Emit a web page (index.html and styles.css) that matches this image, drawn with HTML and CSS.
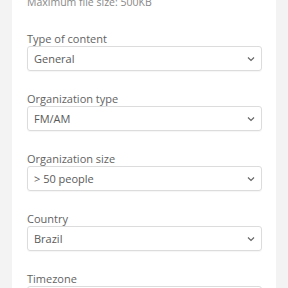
FILE: index.html
```html
<!DOCTYPE html>
<html>
<head>
    <meta charset="utf-8">
    <title>Settings</title>
    <link rel="stylesheet" href="styles.css">
</head>
<body>
    <div class="card">
        <p class="note">Maximum file size: 500KB</p>

        <div class="field">
            <label>Type of content</label>
            <div class="select"><span>General</span>
                <svg class="chev" width="8" height="6" viewBox="0 0 8 6"><path d="M1 1.5 L4 4.5 L7 1.5" fill="none" stroke="#666" stroke-width="1.2"/></svg>
            </div>
        </div>

        <div class="field">
            <label>Organization type</label>
            <div class="select"><span>FM/AM</span>
                <svg class="chev" width="8" height="6" viewBox="0 0 8 6"><path d="M1 1.5 L4 4.5 L7 1.5" fill="none" stroke="#666" stroke-width="1.2"/></svg>
            </div>
        </div>

        <div class="field">
            <label>Organization size</label>
            <div class="select"><span>&gt; 50 people</span>
                <svg class="chev" width="8" height="6" viewBox="0 0 8 6"><path d="M1 1.5 L4 4.5 L7 1.5" fill="none" stroke="#666" stroke-width="1.2"/></svg>
            </div>
        </div>

        <div class="field">
            <label>Country</label>
            <div class="select"><span>Brazil</span>
                <svg class="chev" width="8" height="6" viewBox="0 0 8 6"><path d="M1 1.5 L4 4.5 L7 1.5" fill="none" stroke="#666" stroke-width="1.2"/></svg>
            </div>
        </div>

        <div class="field">
            <label>Timezone</label>
            <div class="select"><span>America/Sao_Paulo</span>
                <svg class="chev" width="8" height="6" viewBox="0 0 8 6"><path d="M1 1.5 L4 4.5 L7 1.5" fill="none" stroke="#666" stroke-width="1.2"/></svg>
            </div>
        </div>
    </div>
</body>
</html>
```

FILE: styles.css
```css
body {
    margin: 0;
    background-color: #f3f3f3;
    font-family: "Open Sans", "Noto Sans", sans-serif;
    color: #555;
}

.card {
    margin: 0 12px;
    padding: 0 14px 40px 15px;
    background-color: #fff;
    height: 400px;
}

.note {
    margin: 0;
    margin-top: -5px;
    font-size: 10.5px;
    line-height: 14px;
    color: #888;
    padding-bottom: 23px;
}

.field {
    margin-bottom: 21px;
}

label {
    display: block;
    font-size: 11px;
    line-height: 14px;
    color: #636363;
}

.select {
    height: 23px;
    border: 1px solid #dcdcdc;
    border-radius: 3px;
    display: flex;
    align-items: center;
    justify-content: space-between;
    padding: 0 6px 0 6px;
    font-size: 11px;
    color: #5a5a5a;
    box-shadow: 0 1px 1px rgba(0, 0, 0, 0.04);
}

.chev {
    display: block;
}
```
